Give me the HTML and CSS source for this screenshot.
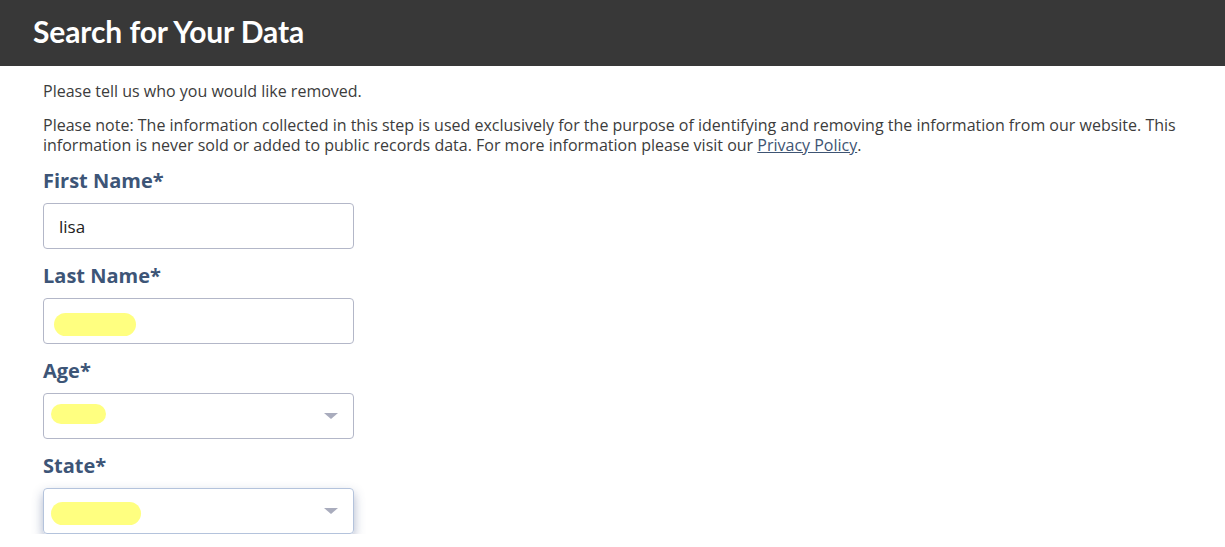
FILE: index.html
```html
<!DOCTYPE html>
<html lang="en">
<head>
    <meta charset="UTF-8">
    <meta name="viewport" content="width=device-width, initial-scale=1.0">
    <title>Search for Your Data</title>
    <link rel="stylesheet" href="styles.css">
</head>
<body>
    <!-- Header -->
    <header class="page-header">
        <h1>Search for Your Data</h1>
    </header>

    <main class="content">
        <p class="intro">Please tell us who you would like removed.</p>
        <p class="note">Please note: The information collected in this step is used exclusively for the purpose of identifying and removing the information from our website. This information is never sold or added to public records data. For more information please visit our <a href="#">Privacy Policy</a>.</p>

        <form class="search-form">
            <div class="field">
                <label for="first-name">First Name*</label>
                <div class="control">
                    <span class="value">lisa</span>
                </div>
            </div>

            <div class="field">
                <label for="last-name">Last Name*</label>
                <div class="control">
                    <span class="redact redact-last"></span>
                </div>
            </div>

            <div class="field">
                <label for="age">Age*</label>
                <div class="control select">
                    <span class="redact redact-age"></span>
                    <span class="caret"></span>
                </div>
            </div>

            <div class="field">
                <label for="state">State*</label>
                <div class="control select focused">
                    <span class="redact redact-state"></span>
                    <span class="caret"></span>
                </div>
            </div>
        </form>
    </main>
</body>
</html>
```

FILE: styles.css
```css
/* Global Styles */
body {
    margin: 0;
    padding: 0;
    font-family: 'Open Sans', 'Liberation Sans', sans-serif;
    background: #fff;
    color: #333;
}

.page-header {
    background: #383838;
    height: 66px;
    display: flex;
    align-items: center;
    padding: 0 33px 4px;
    box-sizing: border-box;
}

.page-header h1 {
    margin: 0;
    color: #fff;
    font-family: 'Lato', 'Open Sans', sans-serif;
    font-size: 30px;
    font-weight: 700;
    line-height: 36px;
    letter-spacing: -0.1px;
}

.content {
    padding: 15px 43px 0;
}

.content p {
    margin: 0;
    font-size: 16px;
    line-height: 20px;
    color: #3c3c3c;
}

.intro {
    margin-bottom: 14px !important;
}

.note a {
    color: #3e5473;
    text-decoration: underline;
}

.search-form {
    display: flex;
    flex-direction: column;
    gap: 14px;
    margin-top: 13px;
}

.field label {
    display: block;
    font-size: 20px;
    font-weight: 700;
    color: #3d5577;
    line-height: 26px;
    margin-bottom: 9px;
}

.control {
    width: 279px;
    height: 44px;
    padding: 0 15px;
    border: 1px solid #b3b7c8;
    border-radius: 4px;
    display: flex;
    align-items: center;
}

.value {
    font-size: 17px;
    color: #222;
}

.redact {
    display: block;
    height: 23px;
    background: #ffff80;
    border-radius: 12px;
}

.redact-last {
    width: 82px;
    margin: 6px 0 0 -5px;
}

.redact-age {
    width: 55px;
    height: 20px;
    margin: -5px 0 0 -8px;
}

.redact-state {
    width: 90px;
    margin: 4px 0 0 -8px;
}

.select {
    justify-content: space-between;
}

.caret {
    width: 0;
    height: 0;
    border-left: 7px solid transparent;
    border-right: 7px solid transparent;
    border-top: 6px solid #a9acbd;
}

.focused {
    border-color: #b4c3dc;
    box-shadow: 0 5px 11px rgba(70, 90, 140, 0.45);
}
```
